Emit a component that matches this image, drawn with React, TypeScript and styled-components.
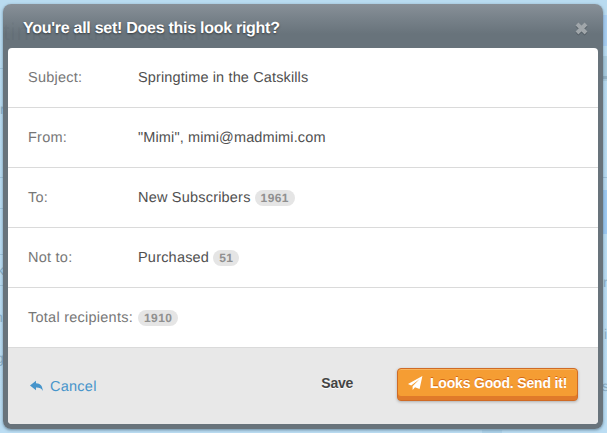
import React from 'react';
import styled, { createGlobalStyle } from 'styled-components';

const GlobalStyle = createGlobalStyle`
  * { box-sizing: border-box; }
  html, body { margin: 0; padding: 0; }
  body {
    background: #bbdcf0;
    font-family: "Liberation Sans", Arial, Helvetica, sans-serif;
    font-size: 14.5px;
    overflow: hidden;
    -webkit-font-smoothing: antialiased;
    text-rendering: geometricPrecision;
  }
`;

const Page = styled.div`
  position: relative;
  width: 607px;
  height: 433px;
  padding: 4px 4px 4px 3px;
  overflow: hidden;
  background: linear-gradient(#b9dbf0, #bbddf3);
`;

/* Pieces of the dimmed page that stick out from behind the dialog. */
const Scrap = styled.span<{ $x: number; $y: number }>`
  position: absolute;
  left: ${p => p.$x}px;
  top: ${p => p.$y}px;
  font-size: 14px;
  line-height: 16px;
  color: #8badc5;
`;

const Patch = styled.span<{ $x: number; $y: number; $w: number; $h: number; $c: string }>`
  position: absolute;
  left: ${p => p.$x}px;
  top: ${p => p.$y}px;
  width: ${p => p.$w}px;
  height: ${p => p.$h}px;
  background: ${p => p.$c};
`;

const Dialog = styled.section`
  position: relative;
  display: flex;
  flex-direction: column;
  width: 600px;
  height: 425px;
  padding: 0 5px 5px;
  border-radius: 8px;
  background: linear-gradient(#889098 0, #78828a 14px, #68737b 30px, #68737b 100%);
  box-shadow: 0 1px 3px rgba(40, 70, 90, 0.55);
`;

const Header = styled.header`
  position: relative;
  display: flex;
  align-items: center;
  justify-content: space-between;
  height: 44px;
  padding: 5px 10px 0 15px;
  flex: none;
`;

const Ghost = styled.span`
  position: absolute;
  left: -5px;
  top: 15px;
  font-size: 24px;
  line-height: 28px;
  letter-spacing: 0.7px;
  color: rgba(50, 60, 68, 0.08);
  white-space: nowrap;
`;

const Title = styled.h1`
  position: relative;
  margin: 1px 0 0;
  font-size: 16px;
  line-height: 20px;
  font-weight: bold;
  letter-spacing: -0.27px;
  color: #fff;
  text-shadow: 0 1px 2px rgba(0, 0, 0, 0.5);
  white-space: nowrap;
`;

const Close = styled.button`
  position: relative;
  display: flex;
  padding: 0;
  border: 0;
  background: none;
`;

const Panel = styled.div`
  display: flex;
  flex-direction: column;
  flex: 1;
  overflow: hidden;
  border-radius: 4px;
  background: #fff;
`;

const Row = styled.div`
  display: flex;
  align-items: center;
  height: 60px;
  padding: 0 20px;
  border-bottom: 1px solid #dadada;
  flex: none;
  line-height: 18px;
`;

const Label = styled.div`
  width: 110px;
  color: #777;
  letter-spacing: 0.25px;
  white-space: nowrap;
`;

const Value = styled.div<{ $spacing?: number }>`
  display: flex;
  align-items: center;
  gap: 4px;
  color: #505050;
  letter-spacing: ${p => p.$spacing ?? 0.13}px;
`;

const Badge = styled.span`
  height: 16px;
  padding: 0 6px;
  border-radius: 8px;
  background: #e5e5e5;
  color: #909090;
  font-size: 12px;
  font-weight: bold;
  line-height: 16px;
  letter-spacing: 0.4px;
`;

const Footer = styled.footer`
  display: flex;
  align-items: flex-start;
  flex: 1;
  padding: 20px 20px 0 21px;
  background: #e8e8e8;
`;

const Cancel = styled.a`
  display: flex;
  align-items: center;
  gap: 7px;
  margin-top: 10px;
  line-height: 18px;
  letter-spacing: 0.25px;
  color: #4795cb;

  svg { margin-bottom: 2px; }
`;

const Save = styled.button`
  margin: 6px 44px 0 auto;
  padding: 0;
  border: 0;
  background: none;
  font: bold 14px/18px "Liberation Sans", Arial, sans-serif;
  letter-spacing: -0.25px;
  color: #444;
  text-shadow: 0 1px 0 #fff;
`;

const Send = styled.button`
  display: flex;
  align-items: center;
  gap: 7px;
  width: 181px;
  height: 33px;
  padding: 0 0 3px 10px;
  border: 1px solid #cf6b26;
  border-radius: 4px;
  background: #f59d33;
  box-shadow: inset 0 1px 0 #f9b45c, inset 0 -4px 0 #e07a2a, 0 1px 3px rgba(0, 0, 0, 0.25);
  font: bold 14px/18px "Liberation Sans", Arial, sans-serif;
  letter-spacing: -0.18px;
  color: #fff;
  text-shadow: 0 -1px 0 rgba(200, 85, 10, 0.75);
  white-space: nowrap;
`;

const CloseIcon = () => (
  <svg width="13" height="14" viewBox="0 0 13 14" fill="none" strokeWidth="4">
    <path d="M2 3 L11 12 M11 3 L2 12" stroke="#4d575f" />
    <path d="M2 2 L11 11 M11 2 L2 11" stroke="#a0a6aa" />
  </svg>
);

const ReplyIcon = () => (
  <svg width="14" height="12" viewBox="0 0 14 12" fill="#4795cb">
    <path d="M1 5.5 L7 .7 V3.3 C11.5 3.5 13.5 6 13.8 11 C12.4 8.4 10.5 7.5 7 7.6 V10.2 Z" />
  </svg>
);

const PlaneIcon = () => (
  <svg width="15" height="16" viewBox="0 0 15 16" fill="#fff">
    <path d="M14.4 1 L0 9 L3.2 10.4 L11.7 3.9 L4.6 11.2 V15 L7 12.2 L11.6 14 Z" />
  </svg>
);

const scraps: { t: string; x: number; y: number }[] = [
  { t: 'r', x: 0, y: 101 },
  { t: 'k', x: -3, y: 262 },
  { t: 'n', x: -5, y: 309 },
  { t: 'g', x: -4, y: 350 },
  { t: 'n', x: 603, y: 274 },
  { t: 'i', x: 604, y: 326 },
  { t: 's', x: 602, y: 378 },
];

const App = () => (
  <>
    <GlobalStyle />
    <Page>
      <Patch $x={603} $y={15} $w={4} $h={31} $c="#a7cdf0" />
      <Patch $x={603} $y={56} $w={4} $h={25} $c="#a9cadd" />
      <Patch $x={603} $y={76} $w={4} $h={3} $c="#91afc2" />
      <Patch $x={603} $y={177} $w={4} $h={1} $c="#9fc0d8" />
      <Patch $x={603} $y={190} $w={4} $h={44} $c="#9dc8f1" />
      {[68, 177, 208, 254, 285].map(y => (
        <Patch key={y} $x={0} $y={y} $w={3} $h={1} $c="#a1c4dc" />
      ))}
      <Patch $x={482} $y={430} $w={20} $h={3} $c="#add2ea" />
      {scraps.map(s => (
        <Scrap key={s.y} $x={s.x} $y={s.y}>{s.t}</Scrap>
      ))}
      <Dialog>
        <Header>
          <Ghost aria-hidden>time in the Catskills</Ghost>
          <Title>You're all set! Does this look right?</Title>
          <Close aria-label="Close"><CloseIcon /></Close>
        </Header>
        <Panel>
          <Row>
            <Label>Subject:</Label>
            <Value>Springtime in the Catskills</Value>
          </Row>
          <Row>
            <Label>From:</Label>
            <Value>"Mimi", mimi@madmimi.com</Value>
          </Row>
          <Row>
            <Label>To:</Label>
            <Value $spacing={0.2}>New Subscribers <Badge>1961</Badge></Value>
          </Row>
          <Row>
            <Label>Not to:</Label>
            <Value $spacing={0.2}>Purchased <Badge>51</Badge></Value>
          </Row>
          <Row>
            <Label>Total recipients:</Label>
            <Value><Badge>1910</Badge></Value>
          </Row>
          <Footer>
            <Cancel><ReplyIcon />Cancel</Cancel>
            <Save>Save</Save>
            <Send><PlaneIcon />Looks Good. Send it!</Send>
          </Footer>
        </Panel>
      </Dialog>
    </Page>
  </>
);

export default App;
